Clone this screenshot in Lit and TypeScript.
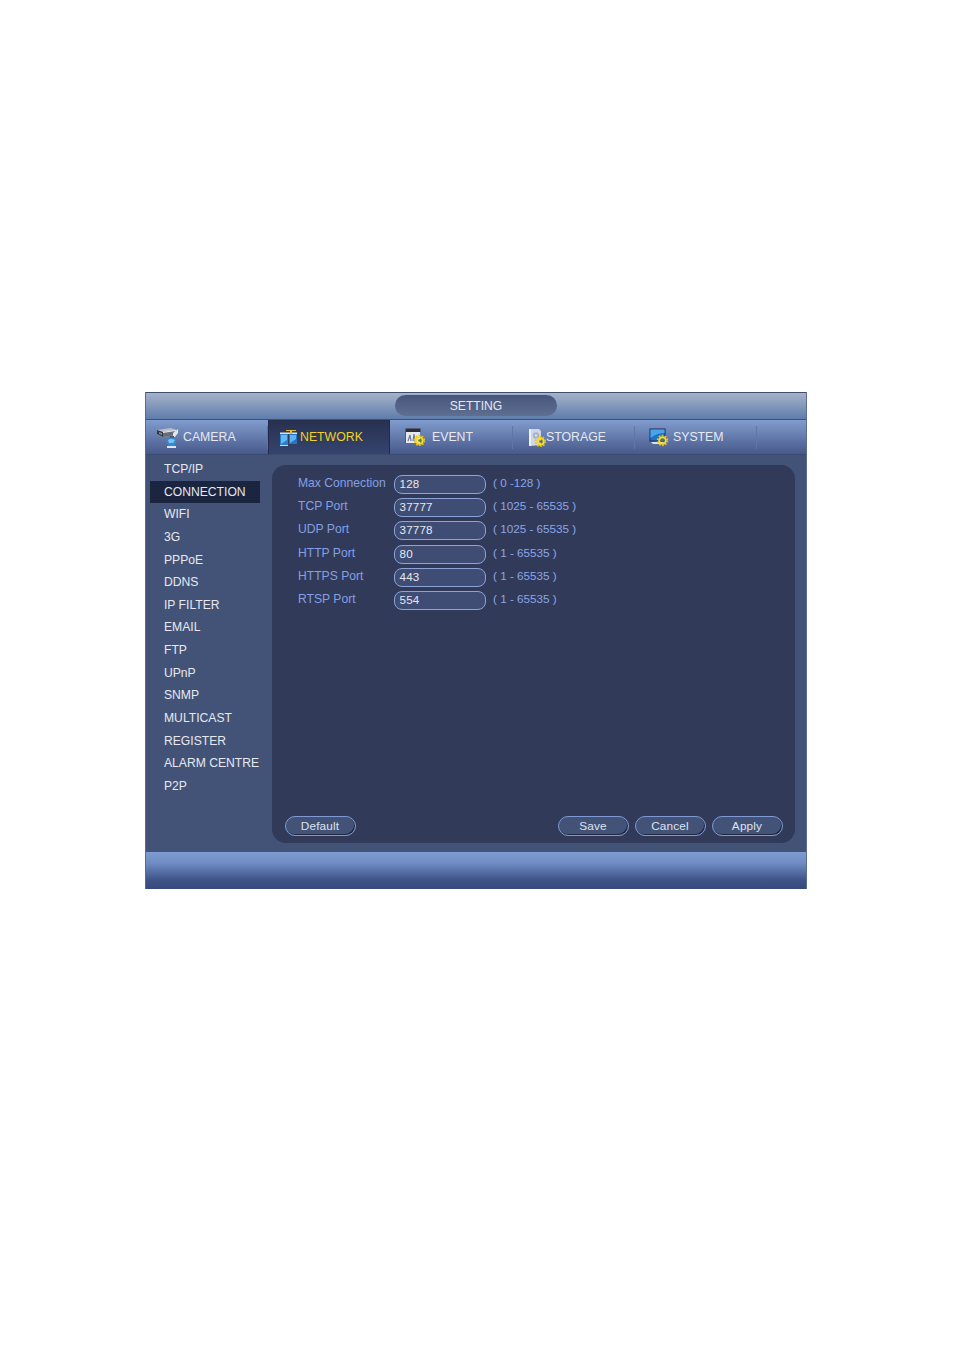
import { LitElement, html, css, svg } from "lit";
import { customElement } from "lit/decorators.js";

const gear = (x: number, y: number) => svg`
  <g transform="translate(${x} ${y})">
    <circle r="4.9" fill="none" stroke="#e9c40a" stroke-width="1.6" stroke-dasharray="1.7 1.4"/>
    <circle r="3.3" fill="none" stroke="#f6dc1a" stroke-width="2"/>
    <circle r="1.3" fill="#7b6a32"/>
  </g>`;

const icons: Record<string, unknown> = {
  camera: svg`<svg class="ic" width="23" height="21" viewBox="0 0 23 21">
    <path d="M1 3 L15 1 L20 3 L20 8 L7 10 L1 7 Z" fill="#b9bec8"/>
    <path d="M1 3 L7 5 L7 10 L1 7 Z" fill="#34373f"/>
    <path d="M3 5 L6 6 L6 8 L3 7 Z" fill="#7f8798"/>
    <path d="M7 5 L20 3 L20 8 L7 10 Z" fill="#666b78"/>
    <path d="M7 4.8 L20 2.8 L20 4 L7 6 Z" fill="#dfe2e8"/>
    <path d="M17 6 L22 2 L22 6 L19 10 L17 10 Z" fill="#e4e6ea"/>
    <path d="M14 9 L18 9 L18 12 L14 12 Z" fill="#50545f"/>
    <circle cx="15.5" cy="15" r="4.6" fill="#2f8bd8"/>
    <path d="M12 13 Q15 11 19 13 L17 16 L13 16 Z" fill="#79c4ee"/>
    <path d="M11 19 L20 19 L20 21 L11 21 Z" fill="#e2e5ea"/>
  </svg>`,
  network: svg`<svg class="ic" width="19" height="17" viewBox="0 0 19 17">
    <path d="M1 3.5 H18 V5 H1 Z" fill="#e8e4d2"/>
    <path d="M7 1 H17 V2 H13 V5 H11 V2 H7 Z" fill="#e6b92a"/>
    <path d="M1 5 H9 V16 H1 Z" fill="#2a7fd0"/>
    <path d="M2 6 H8 V11 L2 15 Z" fill="#66b8ef"/>
    <path d="M10 5 H18 V15 H10 Z" fill="#2575c6"/>
    <path d="M11 6 H17 V10 L11 14 Z" fill="#60b2ea"/>
    <path d="M1 16 H9 V17 H1 Z" fill="#d6dbe2"/>
  </svg>`,
  event: svg`<svg class="ic" width="20" height="18" viewBox="0 0 20 18">
    <rect x="0.5" y="0.5" width="15" height="3.5" fill="#2c2f38"/>
    <rect x="1" y="4" width="14" height="11" fill="#e7e9ee"/>
    <path d="M3 13 L5 7 L6 13 M8 13 L9 6 L10 13" stroke="#6d7ba0" stroke-width="1.2" fill="none"/>
    <path d="M0.5 1 V15" stroke="#555a66"/>
    ${gear(14.5, 12.5)}
  </svg>`,
  storage: svg`<svg class="ic" width="18" height="19" viewBox="0 0 18 19">
    <path d="M1 1 H11 L13 3 V17 L2 18 L1 17 Z" fill="#cfd6e4"/>
    <path d="M1 1 H3 V18 H1 Z" fill="#eef1f6"/>
    <circle cx="8" cy="7.5" r="3.2" fill="#a9b4c9"/>
    <circle cx="8" cy="7.5" r="1" fill="#e9edf3"/>
    ${gear(12.5, 13.5)}
  </svg>`,
  system: svg`<svg class="ic" width="20" height="19" viewBox="0 0 20 19">
    <rect x="0.5" y="0.5" width="16" height="13" fill="#1d2a55"/>
    <rect x="1.5" y="1.5" width="14" height="11" fill="#1e72cc"/>
    <path d="M1.5 1.5 H15.5 V5 Q8 5 1.5 10 Z" fill="#4aa3e8"/>
    <path d="M2 14 H14 L16 16 H4 Z" fill="#dfe3ea"/>
    ${gear(13.5, 12.5)}
  </svg>`,
};

const tabs = [
  { key: "camera", label: "CAMERA" },
  { key: "network", label: "NETWORK" },
  { key: "event", label: "EVENT" },
  { key: "storage", label: "STORAGE" },
  { key: "system", label: "SYSTEM" },
];

const menu = ["TCP/IP", "CONNECTION", "WIFI", "3G", "PPPoE", "DDNS", "IP FILTER", "EMAIL", "FTP", "UPnP", "SNMP", "MULTICAST", "REGISTER", "ALARM CENTRE", "P2P"];

const rows = [
  ["Max Connection", "128", "( 0 -128 )"],
  ["TCP Port", "37777", "( 1025 - 65535 )"],
  ["UDP Port", "37778", "( 1025 - 65535 )"],
  ["HTTP Port", "80", "( 1 - 65535 )"],
  ["HTTPS Port", "443", "( 1 - 65535 )"],
  ["RTSP Port", "554", "( 1 - 65535 )"],
];

@customElement("app-root")
export class AppRoot extends LitElement {
  static styles = css`
    :host { display: block; height: 1348px; background: #fff; font-family: "Liberation Sans", Arial, sans-serif; font-size: 12.15px; color: #e6e9f0; }
    .page { padding: 392px 146px 0 145px; }
    .win { height: 497px; display: flex; flex-direction: column; box-sizing: border-box; border-left: 1px solid #5d6c8e; border-right: 1px solid #5d6c8e; }
    .title { height: 28px; flex: none; box-sizing: border-box; border-top: 1px solid #3f4c6c; border-bottom: 1px solid #3e4f78; background: linear-gradient(#a5b3ca, #5f7cab); display: flex; justify-content: center; align-items: flex-start; padding-top: 2px; }
    .title-pill { width: 162px; height: 21px; border-radius: 11px; background: linear-gradient(#47557a, #5e6f92); display: flex; align-items: center; justify-content: center; }
    .tabs { height: 35px; flex: none; display: flex; background: linear-gradient(#819cce, #47598a); border-bottom: 1px solid #3b4a70; box-sizing: border-box; }
    .tab { width: 122px; flex: none; box-sizing: border-box; display: flex; align-items: center; position: relative; }
    .tab::after { content: ""; position: absolute; right: 0; top: 6px; bottom: 5px; width: 1px; background: #5f77a5; }
    .tab.active { background: linear-gradient(#28304f, #35446e); color: #f2d21f; border-left: 1px solid #22294a; border-right: 1px solid #22294a; }
    .tab.active::after { display: none; }
    .tab .lbl { line-height: 1; font-size: 12.3px; }
    .tab .ic { flex: none; }
    .camera { padding-left: 10px; gap: 4px; }
    .network { padding-left: 10px; gap: 2px; }
    .event { width: 123px; padding-left: 15px; gap: 7px; }
    .storage { padding-left: 15px; gap: 0; }
    .system { padding-left: 14px; gap: 4px; }
    .body { flex: 1; display: flex; background: #435378; min-height: 0; }
    .side { width: 110px; flex: none; margin: 0 12px 0 4px; padding-top: 3px; }
    .item { height: 22.65px; line-height: 22.65px; padding-left: 14px; white-space: nowrap; }
    .item.sel { background: #1c2540; }
    .panel { flex: 1; background: #323a5a; border-radius: 14px; display: flex; flex-direction: column; padding: 10px 12px 7px 13px; margin: 10px 11px 9px 0; }
    .rows { flex: 1; padding-left: 13px; }
    .row { height: 23.2px; display: flex; align-items: flex-start; color: #83a0e4; }
    .row .k { width: 96px; flex: none; line-height: 16px; white-space: nowrap; }
    .input { width: 92px; height: 19px; flex: none; box-sizing: border-box; border: 1.5px solid #8ba3d8; border-radius: 8px; background: #3f4d74; color: #e6e9f0; padding-left: 4.5px; line-height: 15px; font-size: 11.6px; letter-spacing: .2px; }
    .row .r { margin-left: 7px; line-height: 16px; font-size: 11.7px; color: #8aa5e8; white-space: nowrap; }
    .btns { display: flex; }
    .btn { width: 71px; height: 20px; box-sizing: border-box; border: 1.5px solid #7f9ad2; border-radius: 10px; background: #435378; box-shadow: inset -1px -1px 0 #1f2743; display: flex; align-items: center; justify-content: center; padding-right: 1px; font-size: 11.8px; letter-spacing: .15px; color: #dde2ec; margin-left: 6px; }
    .btn:first-child { margin-left: 0; }
    .spacer { flex: 1; }
    .foot { height: 37px; flex: none; background: linear-gradient(#7e9cd2, #6f8dc4 30%, #3f5488 75%, #36497c); }
  `;

  render() {
    return html`<div class="page"><div class="win">
      <div class="title"><div class="title-pill">SETTING</div></div>
      <div class="tabs">
        ${tabs.map((t) => html`<div class="tab ${t.key} ${t.key === "network" ? "active" : ""}">${icons[t.key]}<span class="lbl">${t.label}</span></div>`)}
      </div>
      <div class="body">
        <div class="side">
          ${menu.map((m) => html`<div class="item ${m === "CONNECTION" ? "sel" : ""}">${m}</div>`)}
        </div>
        <div class="panel">
          <div class="rows">
            ${rows.map((r) => html`<div class="row"><span class="k">${r[0]}</span><div class="input">${r[1]}</div><span class="r">${r[2]}</span></div>`)}
          </div>
          <div class="btns">
            <div class="btn">Default</div>
            <div class="spacer"></div>
            <div class="btn">Save</div>
            <div class="btn">Cancel</div>
            <div class="btn">Apply</div>
          </div>
        </div>
      </div>
      <div class="foot"></div>
    </div></div>`;
  }
}
